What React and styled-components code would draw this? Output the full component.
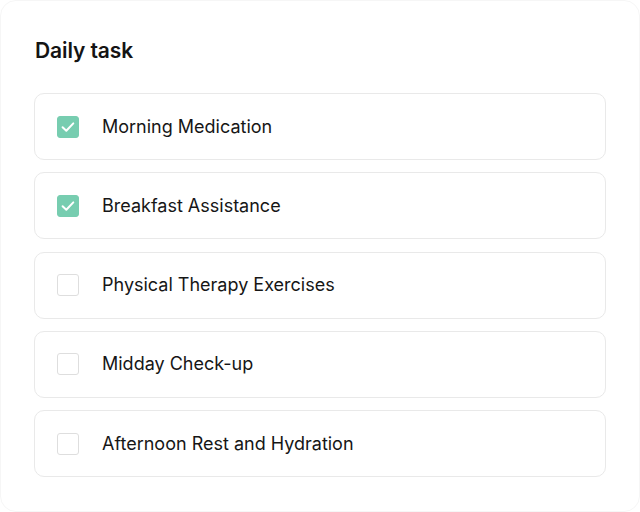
import React, { useState } from "react";
import styled, { createGlobalStyle } from "styled-components";

const Global = createGlobalStyle`
  html, body { margin: 0; padding: 0; background: #ffffff; }
  body { font-family: Inter, "Noto Sans", sans-serif; color: #151515; }
  * { box-sizing: border-box; }
`;

const Card = styled.div`
  width: 640px;
  height: 512px;
  border: 1px solid #f6f6f6;
  border-radius: 16px;
  padding: 38px 33px 0 33px;
  background: #fff;
`;

const Title = styled.h2`
  margin: 0 0 30px 1px;
  font-size: 21px;
  font-weight: 600;
  line-height: 24px;
  letter-spacing: -0.1px;
  color: #141414;
`;

const List = styled.div`
  display: flex;
  flex-direction: column;
  gap: 12.25px;
`;

const Row = styled.label`
  display: flex;
  align-items: center;
  gap: 23px;
  height: 67px;
  padding: 0 22px;
  border: 1px solid #e9e9e9;
  border-radius: 10px;
  cursor: pointer;
`;

const Box = styled.span`
  width: 22px;
  height: 22px;
  flex: none;
  border-radius: 3px;
  display: flex;
  align-items: center;
  justify-content: center;
  background: ${(p) => (p.$checked ? "#77cdb0" : "#fff")};
  border: 1px solid ${(p) => (p.$checked ? "#77cdb0" : "#dedede")};
`;

const Label = styled.span`
  font-size: 18px;
  line-height: 22px;
  color: #161616;
  letter-spacing: 0;
`;

const tasks = [
  { name: "Morning Medication", done: true },
  { name: "Breakfast Assistance", done: true },
  { name: "Physical Therapy Exercises", done: false },
  { name: "Midday Check-up", done: false },
  { name: "Afternoon Rest and Hydration", done: false },
];

export default function App() {
  const [items, setItems] = useState(tasks);
  const toggle = (i) =>
    setItems((s) => s.map((t, j) => (j === i ? { ...t, done: !t.done } : t)));
  return (
    <>
      <Global />
      <Card>
        <Title>Daily task</Title>
        <List>
          {items.map((t, i) => (
            <Row key={t.name} onClick={() => toggle(i)}>
              <Box $checked={t.done}>
                {t.done && (
                  <svg width="20" height="20" viewBox="0 0 20 20" fill="none">
                    <path
                      d="M4.6 10.3 L8.3 13.8 L15.3 6.4"
                      stroke="#fff"
                      strokeWidth="2"
                      strokeLinecap="round"
                      strokeLinejoin="round"
                    />
                  </svg>
                )}
              </Box>
              <Label>{t.name}</Label>
            </Row>
          ))}
        </List>
      </Card>
    </>
  );
}
